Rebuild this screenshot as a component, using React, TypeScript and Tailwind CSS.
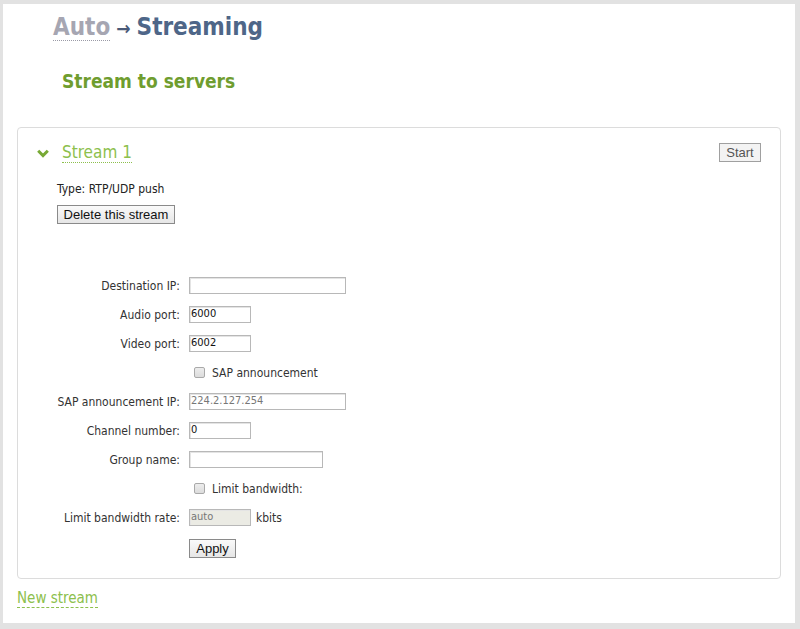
import React from "react"

const ui = { fontFamily: "'DejaVu Sans Condensed', 'DejaVu Sans', Verdana, sans-serif" }
const btn = { fontFamily: "'Liberation Sans', Arial, sans-serif" }

function Field({ label, width, value, muted, disabled, suffix }: { label: string; width: number; value?: string; muted?: boolean; disabled?: boolean; suffix?: string }) {
  return (
    <div className="flex h-[29px] items-center">
      <div className="w-[162px] text-right text-[12px] text-[#333]">{label}</div>
      <div
        className={`ml-[9px] flex h-[17px] items-center border border-[#b8b8b8] pl-[1px] text-[11px] shadow-[inset_1px_1px_0_#e4e4e4] ${disabled ? "bg-[#ebebe4]" : "bg-white"} ${muted ? "text-[#777]" : "text-[#111]"}`}
        style={{ width }}
      >
        {value}
      </div>
      {suffix && <span className="ml-[5px] text-[12px] text-[#333]">{suffix}</span>}
    </div>
  )
}

function Check({ label }: { label: string }) {
  return (
    <div className="flex h-[29px] items-center pl-[176px]">
      <div className="h-[11px] w-[11px] rounded-[2px] border border-[#a9a9a9] bg-gradient-to-b from-[#ededed] to-[#dcdcdc]" />
      <span className="ml-[7px] text-[12px] text-[#333]">{label}</span>
    </div>
  )
}

export default function App() {
  return (
    <div className="h-[629px] w-full border-b-[6px] border-l-[3px] border-r-[5px] border-t-[4px] border-[#e2e2e2] bg-white" style={ui}>
      <div className="pl-[14px]">
        {/* Breadcrumb */}
        <div className="flex items-baseline pl-[36px] pt-[8px] text-[24px] font-bold leading-[30px]">
          <span className="border-b border-dotted border-[#9a9aa6] leading-[26px] text-[#a6a6b2]">Auto</span>
          <span className="mx-[6px] text-[19px] leading-none text-[#4a5a78]">→</span>
          <span className="text-[#4e6688]">Streaming</span>
        </div>

        <h2 className="mt-[27px] pl-[45px] text-[19px] font-bold leading-[24px] text-[#6f9d2f]">Stream to servers</h2>

        {/* Stream panel */}
        <div className="mt-[34px] mr-[14px] h-[452px] rounded-[4px] border border-[#dcdcdc]">
          <div className="flex items-center justify-between pt-[14px] pr-[19px] pl-[19px]">
            <div className="flex items-center">
              <svg width="12" height="9" viewBox="0 0 12 9" className="mt-[1px]">
                <path d="M1.2 1.8 L6 6.6 L10.8 1.8" fill="none" stroke="#78a935" strokeWidth="3" />
              </svg>
              <span className="ml-[13px] border-b border-dotted border-[#8dc04d] text-[17px] leading-[20px] text-[#8dc04d]">Stream 1</span>
            </div>
            <button className="h-[19px] w-[42px] border border-[#a0a0a0] bg-[#f3f3f3] text-[13px] leading-[17px] text-[#555]" style={btn}>
              Start
            </button>
          </div>

          <div className="pl-[39px]">
            <div className="mt-[19px] text-[12px] leading-[14px] text-[#222]">Type: RTP/UDP push</div>
            <button className="mt-[9px] h-[19px] w-[118px] border border-[#8a8a8a] bg-gradient-to-b from-[#fafafa] to-[#e6e6e6] text-[13px] leading-[17px] text-[#111]" style={btn}>
              Delete this stream
            </button>
          </div>

          <div className="mt-[45px]">
            <Field label="Destination IP:" width={157} />
            <Field label="Audio port:" width={62} value="6000" />
            <Field label="Video port:" width={62} value="6002" />
            <Check label="SAP announcement" />
            <Field label="SAP announcement IP:" width={157} value="224.2.127.254" muted />
            <Field label="Channel number:" width={62} value="0" />
            <Field label="Group name:" width={134} />
            <Check label="Limit bandwidth:" />
            <Field label="Limit bandwidth rate:" width={62} value="auto" muted disabled suffix="kbits" />
            <div className="mt-[4px] pl-[171px]">
              <button className="h-[19px] w-[47px] border border-[#8a8a8a] bg-gradient-to-b from-[#fafafa] to-[#e6e6e6] text-[13px] leading-[17px] text-[#111]" style={btn}>
                Apply
              </button>
            </div>
          </div>
        </div>

        <div className="mt-[7px]">
          <span className="border-b border-dashed border-[#8dc04d] text-[15px] leading-[18px] text-[#8dc04d]">New stream</span>
        </div>
      </div>
    </div>
  )
}
